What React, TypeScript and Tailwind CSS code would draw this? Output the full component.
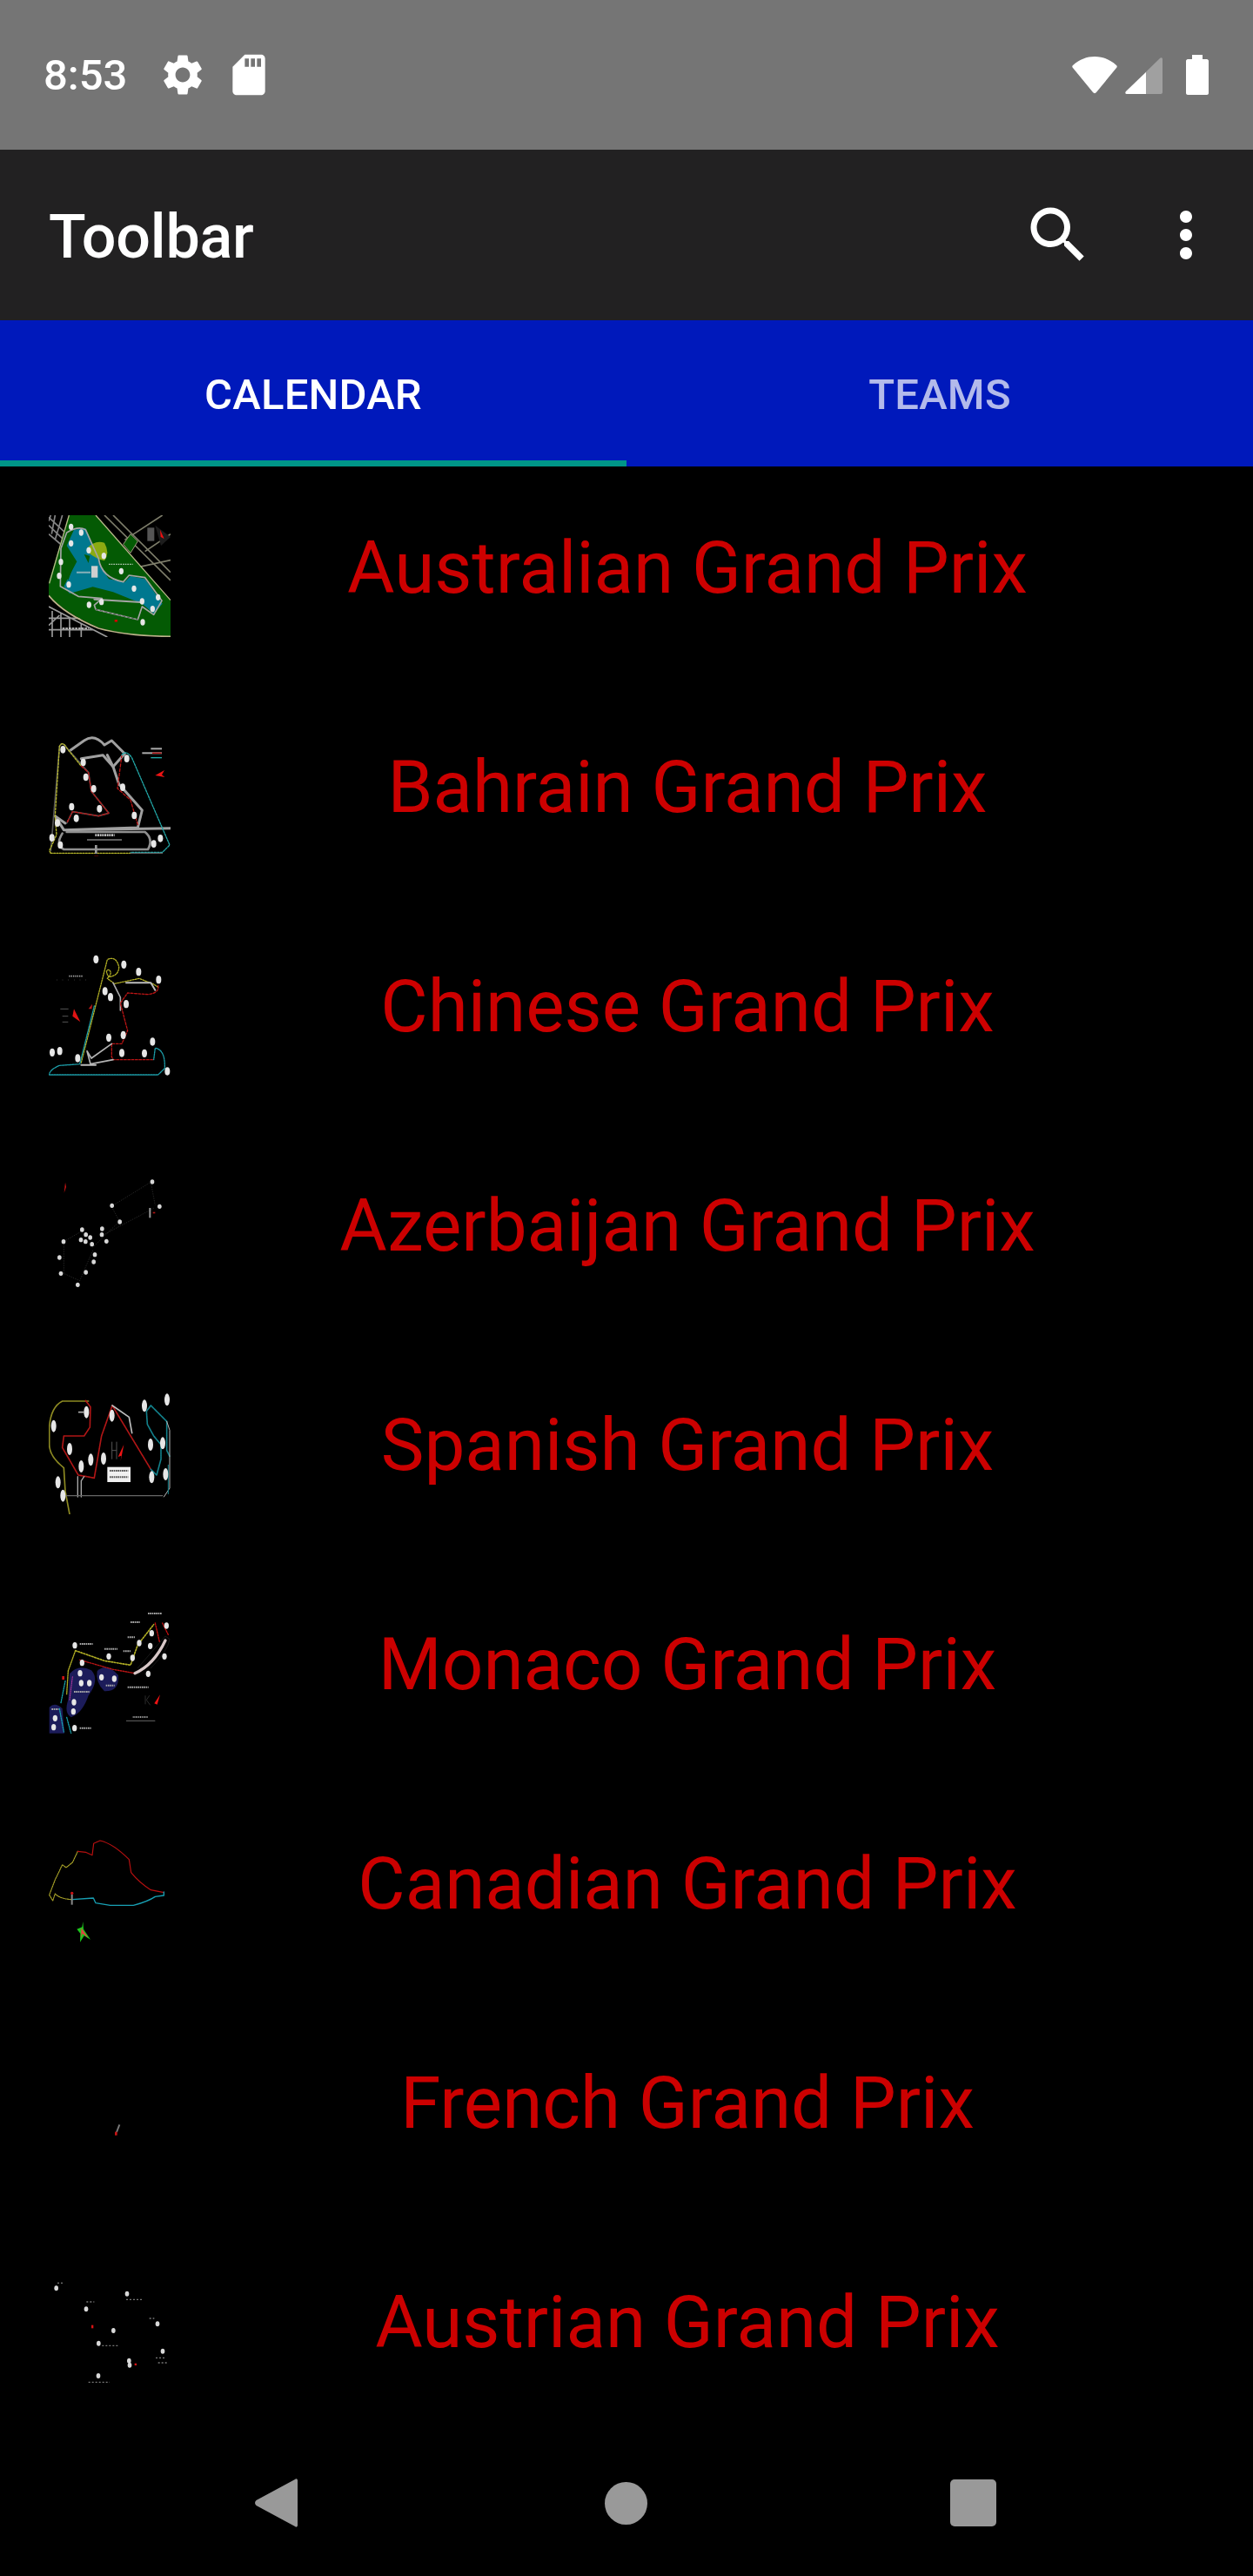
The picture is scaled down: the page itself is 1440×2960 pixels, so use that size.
import React from "react";

const dots = (pts: number[][], rx = 7, ry = 10, fill = "#e6e6e6") =>
  pts.map((p, i) => <ellipse key={i} cx={p[0]} cy={p[1]} rx={rx} ry={ry} fill={fill} />);

function Line({ d, c, w = 3, dash }: { d: string; c: string; w?: number; dash?: string }) {
  return <path d={d} fill="none" stroke={c} strokeWidth={w} strokeDasharray={dash} strokeLinejoin="round" strokeLinecap="round" />;
}

function MapBox({ y, children }: { y: number; children: React.ReactNode }) {
  return (
    <svg viewBox={`78 ${y} 420 420`} className="w-[140px] h-[140px] shrink-0 blur-[0.7px]">
      {children}
    </svg>
  );
}

function Australia() {
  return (
    <MapBox y={65}>
      <g stroke="#858585" strokeWidth="5" fill="none">
        <path d="M78 72 L140 130 M78 100 L130 150 M78 130 L125 170 M85 65 L78 85 M100 65 L88 130 M125 65 L100 150" />
        <path d="M270 65 L498 290 M300 65 L498 262 M410 190 L498 130 M360 250 L498 220 M340 150 L470 65" stroke="#7d7d6a" />
        <path d="M78 380 L280 485 M90 395 L90 485 M78 420 L190 420 M78 460 L230 460 M120 400 L120 485 M150 420 L150 485 M190 440 L190 485 M115 410 L78 445" stroke="#9a9a9a" />
      </g>
      <path d="M148 65 L240 65 L498 358 L498 482 Q350 482 250 452 Q130 400 78 340 L78 295 Z" fill="#045a04" />
      <path d="M148 65 L80 300 M240 65 L498 358" stroke="#b9b98a" strokeWidth="4" fill="none" />
      <path d="M78 342 Q130 405 250 455 Q350 482 498 483" stroke="#bdb48a" strokeWidth="5" fill="none" />
      <path d="M165 115 L205 110 L240 190 L255 240 L285 285 L340 295 L360 275 L410 285 L470 370 L440 405 L400 370 L300 330 L230 312 L150 335 L130 310 L175 225 L140 170 Z" fill="#00788f" />
      <path d="M210 180 Q235 150 270 160 Q290 195 270 222 Q240 215 210 190 Z" fill="#8cab12" />
      <path d="M130 195 L165 235 L145 290 L120 200 Z" fill="#045a04" />
      <path d="M200 200 L215 230 L220 205 Z" fill="#045a04" />
      <path d="M360 130 L385 155 L360 195 L335 165 Z" fill="#045a04" stroke="#9a9a7a" strokeWidth="3" />
      <Line d="M140 125 Q180 100 205 115 L250 215 Q260 280 335 295 L355 272 L410 280 L468 360 L440 408 L400 380 L385 425 L240 390 L235 375 L262 352 L180 345 L118 310 L120 180 Z" c="#a5a5a5" w={5} />
      <Line d="M235 355 L395 365" c="#a5a5a5" w={6} />
      <Line d="M240 390 L385 425" c="#333" w={2} dash="8 8" />
      {dots([[155,105],[190,125],[155,162],[120,226],[114,274],[147,304],[216,186],[268,205],[328,258],[372,318],[455,348],[400,362],[436,388],[402,434],[260,364],[217,374]], 8, 11)}
      <rect x="225" y="240" width="22" height="40" fill="#cfcfcf" />
      <path d="M175 262 H222" stroke="#ccc" strokeWidth="6" strokeDasharray="4 2" />
      <path d="M285 234 H368" stroke="#b5c9b5" strokeWidth="4" strokeDasharray="5 3" />
      <rect x="418" y="108" width="24" height="46" fill="#555" />
      <path d="M445 100 L498 140 L465 170 Z" fill="#1d1d1d" />
      <path d="M462 115 L476 146 L464 140 Z" fill="#f01010" />
      <rect x="305" y="425" width="10" height="8" fill="#d00000" />
      <path d="M125 455 H215" stroke="#ddd" strokeWidth="5" strokeDasharray="8 3" />
    </MapBox>
  );
}

function Bahrain() {
  return (
    <MapBox y={39}>
      <Line d="M150 95 L200 60 Q235 35 270 75 L295 60 L340 105 L300 150 L265 110 L190 122" c="#a0a0a0" w={9} />
      <Line d="M300 150 L280 110 M300 150 L320 210 L400 300 L385 360 L130 368 L100 320 L135 345 M498 362 L130 368" c="#a0a0a0" w={9} />
      <Line d="M125 380 Q100 420 130 435 H420 Q440 400 410 375 H140" c="#8f8f8f" w={8} />
      <Line d="M115 80 L85 440 M115 80 Q125 60 140 85 L215 170 L225 235 L285 310 L250 320 L160 305 L140 345" c="#555" w={5} />
      <Line d="M85 448 L80 440 L105 385 L100 320 L115 80 Q125 60 140 85 L190 148" c="#b5b52a" w={4} dash="7 5" />
      <Line d="M85 448 H360" c="#b5b52a" w={4} dash="6 4" />
      <Line d="M190 148 L215 170 L225 235 L285 310 L250 320 L160 305 L140 345 M385 350 L360 265 L315 225 L330 110" c="#b81414" w={4} dash="10 6" />
      <Line d="M330 110 Q345 90 365 120 L495 420 L470 445 H360" c="#22a7a7" w={4} dash="7 4" />
      <Line d="M360 448 H470" c="#777" w={3} />
      {dots([[127,91],[197,135],[206,186],[233,226],[253,295],[157,288],[173,328],[108,344],[89,395],[118,420],[347,122],[333,221],[373,318],[463,397],[440,416]], 9, 13)}
      <path d="M238 386 H305" stroke="#bbb" strokeWidth="8" strokeDasharray="6 2" />
      <path d="M210 402 H330" stroke="#bbb" strokeWidth="3" />
      <rect x="430" y="85" width="38" height="6" fill="#aaa" />
      <rect x="400" y="100" width="68" height="6" fill="#aaa" />
      <rect x="435" y="101" width="32" height="4" fill="#b81414" />
      <rect x="430" y="117" width="38" height="4" fill="#22a7a7" />
      <path d="M445 180 L477 162 L468 178 L478 186 Z" fill="#ef1414" />
      <rect x="237" y="420" width="8" height="30" fill="#999" />
      <rect x="235" y="458" width="14" height="4" fill="#d00" />
    </MapBox>
  );
}

function Chinese() {
  return (
    <MapBox y={795}>
      <Line d="M190 1170 L280 815 Q310 800 320 840 Q320 870 285 875 Q270 850 285 850 Q300 860 280 880 L305 898 L390 880 L440 900 L455 910" c="#b0ad24" w={4} dash="5 4" />
      <Line d="M300 895 L325 945 L325 990" c="#aaaaaa" w={5} />
      <Line d="M345 895 L430 895 L445 920" c="#bdbdbd" w={6} />
      <Line d="M455 905 Q460 930 420 935 L350 930 L325 965 L350 1060 L330 1105 L295 1105 L295 1150 L300 1160 H440" c="#b81414" w={4} dash="8 5" />
      <Line d="M295 1105 L225 1155 L210 1130 L222 1175 L300 1160" c="#b3b3b3" w={5} />
      <Line d="M235 975 L185 1175 L115 1180 Q80 1195 80 1212 H455 L478 1190 Q480 1125 445 1120 L440 1160" c="#1c9ca7" w={4} dash="6 3" />
      <Line d="M190 1178 H240" c="#bbb" w={6} />
      {dots([[241,814],[337,832],[388,857],[457,884],[272,924],[291,944],[345,968],[335,1075],[285,1084],[330,1137],[408,1138],[436,1098],[487,1200],[178,1155],[90,1135],[116,1130]], 9, 14)}
      <path d="M105 885 H225" stroke="#777" strokeWidth="2" strokeDasharray="2 18" />
      <path d="M148 872 H195" stroke="#aaa" strokeWidth="5" strokeDasharray="4 3" />
      <path d="M165 985 L187 1030 L160 1010 Z" fill="#e01414" />
      <path d="M215 985 L228 968 L226 985 Z" fill="#c01818" />
      <path d="M118 985 H146 M125 1010 H145 M125 1030 H145" stroke="#555" strokeWidth="3" />
    </MapBox>
  );
}

function Azerbaijan() {
  return (
    <MapBox y={144}>
      <path d="M135 176 L131 212 L138 192 Z" fill="#d01414" />
      <path d="M130 380 L190 345 M300 255 L430 175 L445 255 M295 260 L322 310 L230 400 M440 265 L270 355 M230 410 L185 515 L130 490 L130 380" stroke="#3a3a3a" strokeWidth="2" strokeDasharray="4 4" fill="none" />
      {dots([[435,174],[460,259],[296,256],[323,312],[262,336],[261,356],[277,379],[193,339],[206,356],[221,366],[189,374],[205,380],[227,389],[237,425],[233,450],[206,486],[178,529],[120,490],[115,435],[129,380]], 7, 8, "#d8d8d8")}
      <rect x="424" y="264" width="6" height="34" fill="#9a9a9a" />
      <rect x="437" y="278" width="8" height="5" fill="#b01414" />
    </MapBox>
  );
}

function Spanish() {
  return (
    <MapBox y={900}>
      <Line d="M215 930 H125 Q85 950 80 1020 V1080 Q80 1120 130 1160 L135 1240 L150 1320" c="#8d8a22" w={5} />
      <Line d="M205 928 L222 950 L220 1020 L200 1050 H130 L125 1090 L180 1185 L235 1195 L260 1050 L297 945 L430 1165" c="#b01616" w={5} dash="4 2" />
      <Line d="M297 945 L355 985 L365 1040" c="#bdbdbd" w={5} />
      <Line d="M178 1190 V1260 M190 1260 V1205 L200 1190" c="#aaaaaa" w={4} />
      <Line d="M430 1165 L450 1185 L465 1130 V1080 L440 1050 L418 1010 L415 965 L430 945 L485 1000 V1100 L495 1120" c="#12808b" w={5} dash="4 2" />
      <Line d="M485 1000 L495 1030 V1230 L475 1260" c="#bbb" w={3} />
      <Line d="M490 1150 V1250" c="#12808b" w={3} dash="4 2" />
      <Line d="M135 1256 H470" c="#666" w={4} />
      {dots([[95,1016],[150,1095],[208,968],[190,1155],[223,1132],[267,1128],[110,1210],[296,980],[408,946],[486,925],[429,1080],[471,1075],[433,1192],[481,1182],[127,1256]], 9, 21)}
      <rect x="280" y="1157" width="80" height="52" fill="#f0f0f0" />
      <path d="M288 1170 H352 M288 1192 H352" stroke="#555" strokeWidth="6" strokeDasharray="5 2" />
      <path d="M296 1070 V1130 M312 1070 V1130 M296 1100 H312" stroke="#555" strokeWidth="3" />
      <path d="M337 1080 L317 1122 L328 1118 L326 1136 Z" fill="#ef1414" />
      <path d="M180 968 H200" stroke="#aaa" strokeWidth="5" />
    </MapBox>
  );
}

function Monaco() {
  return (
    <MapBox y={96}>
      <path d="M150 310 Q180 275 225 298 Q255 330 215 385 Q195 445 155 460 Q130 445 145 400 Z" fill="#1c1c5a" />
      <path d="M245 300 Q280 270 318 315 Q322 372 270 370 Q238 340 245 300 Z" fill="#1c1c5a" />
      <path d="M80 425 Q100 405 125 430 L132 515 H80 Z" fill="#1c1c5a" />
      <Line d="M170 230 L145 300 L140 380" c="#b0ad24" w={4} dash="5 3" />
      <Line d="M170 230 L270 265 L360 280 L385 210 L440 140" c="#b0ad24" w={5} dash="5 5" />
      <Line d="M185 262 L300 295 L375 308" c="#b81414" w={4} dash="5 4" />
      <Line d="M375 308 Q440 280 480 195" c="#d8c8c8" w={10} />
      <Line d="M445 135 L460 200 M490 175 L470 135" c="#c01010" w={4} dash="6 4" />
      <Line d="M385 290 L480 180 L495 190 Q490 230 430 290" c="#222" w={2} />
      <Line d="M160 320 L150 400" c="#b53aa0" w={3} dash="4 3" />
      <Line d="M135 335 L120 410 M140 460 L155 515 M115 430 L130 510" c="#16a0ac" w={4} dash="4 4" />
      {dots([[168,212],[193,272],[285,250],[367,255],[390,204],[428,214],[433,170],[484,144],[477,250],[421,310],[186,308],[190,342],[218,342],[260,322],[304,327],[165,408],[163,440],[100,463],[95,494],[167,497]], 8, 11)}
      <path d="M360 132 H392 M420 102 H468 M350 184 H375 M270 224 H315 M335 232 H360 M185 207 H230 M350 356 H422 M185 497 H224 M165 372 H218 M275 350 H305 M88 432 H112" stroke="#a8a8a8" strokeWidth="6" strokeDasharray="5 2" />
      <path d="M345 472 H445" stroke="#999" strokeWidth="2" />
      <path d="M368 459 H420" stroke="#999" strokeWidth="6" strokeDasharray="3 2" />
      <path d="M462 382 L442 412 L452 416 Z" fill="#ef1414" />
      <path d="M411 385 V415 M425 385 L415 400 L428 418" stroke="#444" strokeWidth="2" fill="none" />
      <rect x="124" y="318" width="8" height="12" fill="#d01414" />
    </MapBox>
  );
}

function Canadian() {
  return (
    <MapBox y={852}>
      <Line d="M155 1088 Q115 1085 100 1068 L92 1092 L80 1072 L100 1020 L125 968 L138 978 L160 960 L178 922" c="#a8a228" w={3.5} dash="5 3" />
      <Line d="M178 922 L205 925 L228 935 L233 895 L255 885 Q300 895 355 950 L362 995 Q390 1030 430 1055 L475 1064" c="#b81010" w={3.5} />
      <Line d="M160 1088 L232 1083 L240 1100 L290 1108 H370 Q420 1095 445 1078 L475 1074 L475 1062" c="#18a0b4" w={4} />
      <rect x="155" y="1070" width="6" height="36" fill="#888" />
      <circle cx="158" cy="1066" r="5" fill="#d01414" />
      <path d="M196 1164 L198 1190 L222 1226 L200 1213 L186 1235 L187 1205 L175 1190 L193 1183 Z" fill="#1cc81c" />
      <path d="M190 1186 L214 1220 L194 1205 L190 1222 Z" fill="#e84040" />
    </MapBox>
  );
}

function French() {
  return (
    <MapBox y={48}>
      <path d="M322 304 L312 330" stroke="#777" strokeWidth="6" />
      <rect x="306" y="329" width="8" height="12" fill="#c81414" />
    </MapBox>
  );
}

function Austrian() {
  return (
    <MapBox y={804}>
      {dots([[104,868],[207,940],[348,887],[453,991],[301,1014],[250,1058],[471,1085],[249,1170],[355,1118],[357,1133]], 7, 9, "#d8d8d8")}
      <path d="M108 850 H130 M208 915 H235 M345 907 H400 M425 972 H442 M262 1066 H316 M447 1108 H478 M455 1125 H486 M215 1192 H288" stroke="#777" strokeWidth="4" strokeDasharray="6 6" />
      <rect x="225" y="995" width="7" height="11" fill="#d81414" />
      <rect x="374" y="1127" width="7" height="7" fill="#d81414" />
    </MapBox>
  );
}

const races: [string, React.ReactNode][] = [
  ["Australian Grand Prix", <Australia />],
  ["Bahrain Grand Prix", <Bahrain />],
  ["Chinese Grand Prix", <Chinese />],
  ["Azerbaijan Grand Prix", <Azerbaijan />],
  ["Spanish Grand Prix", <Spanish />],
  ["Monaco Grand Prix", <Monaco />],
  ["Canadian Grand Prix", <Canadian />],
  ["French Grand Prix", <French />],
  ["Austrian Grand Prix", <Austrian />],
];

export default function App() {
  return (
    <div className="w-[1440px] h-[2960px] flex flex-col bg-black overflow-hidden font-['Roboto',sans-serif]">
      <div className="h-[172px] shrink-0 bg-[#757575] flex items-center pl-[50px] pr-[51px] text-white">
        <span className="text-[49px] leading-[58px] font-medium w-[132px] mt-[2px]">8:53</span>
        <svg viewBox="0 0 24 24" className="w-[56px] h-[56px] fill-white">
          <path d="M19.14 12.94c.04-.3.06-.61.06-.94 0-.32-.02-.64-.07-.94l2.03-1.58c.18-.14.23-.41.12-.61l-1.92-3.32c-.12-.22-.37-.29-.59-.22l-2.39.96c-.5-.38-1.03-.7-1.62-.94l-.36-2.54c-.04-.24-.24-.41-.48-.41h-3.84c-.24 0-.43.17-.47.41l-.36 2.54c-.59.24-1.13.57-1.62.94l-2.39-.96c-.22-.08-.47 0-.59.22L2.74 8.87c-.12.21-.08.47.12.61l2.03 1.58c-.05.3-.09.63-.09.94s.02.64.07.94l-2.03 1.58c-.18.14-.23.41-.12.61l1.92 3.32c.12.22.37.29.59.22l2.39-.96c.5.38 1.03.7 1.62.94l.36 2.54c.05.24.24.41.48.41h3.84c.24 0 .44-.17.47-.41l.36-2.54c.59-.24 1.13-.56 1.62-.94l2.39.96c.22.08.47 0 .59-.22l1.92-3.32c.12-.22.07-.47-.12-.61l-2.01-1.58zM12 15.6c-1.98 0-3.6-1.62-3.6-3.6s1.62-3.6 3.6-3.6 3.6 1.62 3.6 3.6-1.62 3.6-3.6 3.6z" />
        </svg>
        <svg viewBox="0 0 24 24" className="w-[56px] h-[56px] fill-white ml-[20px]">
          <path d="M18 2h-8L4.02 8 4 20c0 1.1.9 2 2 2h12c1.1 0 2-.9 2-2V4c0-1.1-.9-2-2-2zm-6 6h-2V4h2v4zm3 0h-2V4h2v4zm3 0h-2V4h2v4z" />
        </svg>
        <svg viewBox="0 0 54 44" className="w-[54px] h-[44px] fill-white ml-auto">
          <path d="M2 11C10 4 18 1 27 1s17 3 25 10c1 1 1 2 0 3L29 42c-1 1.500-3 1.500-4 0L2 14c-1-1-1-2 0-3z" />
        </svg>
        <svg viewBox="0 0 43 43" className="w-[43px] h-[43px] ml-[8px]">
          <path d="M40 2c1-1 3-1 3 1v38c0 1-1 2-2 2H2c-2 0-2-2-1-3z" fill="#a0a0a0" />
          <path d="M24 18L1 40c-1 1-1 3 1 3h22z" fill="#ffffff" />
        </svg>
        <svg viewBox="0 0 26 46" className="w-[26px] h-[46px] fill-white ml-[27px]">
          <path d="M7 0h12v5h5c1 0 2 1 2 2v37c0 1-1 2-2 2H2c-1 0-2-1-2-2V7c0-1 1-2 2-2h5z" />
        </svg>
      </div>
      <div className="h-[196px] shrink-0 bg-[#222122] flex items-center pl-[56px] pr-[35px]">
        <span className="text-[70px] leading-[82px] font-medium text-white mt-[3px] tracking-[-0.2px]">Toolbar</span>
        <svg viewBox="0 0 24 24" className="w-[84px] h-[84px] fill-white ml-auto">
          <path d="M15.5 14h-.79l-.28-.27C15.41 12.59 16 11.11 16 9.5 16 5.91 13.09 3 9.5 3S3 5.91 3 9.5 5.91 16 9.5 16c1.61 0 3.09-.59 4.23-1.57l.27.28v.79l5 4.99L20.49 19l-4.99-5zm-6 0C7.01 14 5 11.99 5 9.5S7.01 5 9.5 5 14 7.01 14 9.5 11.99 14 9.5 14z" />
        </svg>
        <svg viewBox="0 0 24 24" className="w-[84px] h-[84px] fill-white ml-[63px]">
          <path d="M12 8c1.100 0 2-.9 2-2s-.9-2-2-2-2 .9-2 2 .9 2 2 2zm0 2c-1.100 0-2 .9-2 2s.9 2 2 2 2-.9 2-2-.9-2-2-2zm0 6c-1.100 0-2 .9-2 2s.9 2 2 2 2-.9 2-2-.9-2-2-2z" />
        </svg>
      </div>
      <div className="h-[168px] shrink-0 bg-[#0019bb] flex text-[49px] leading-[58px] font-medium tracking-[0.2px]">
        <div className="flex-1 flex items-center justify-center text-white border-b-[7px] border-[#009688] pt-[10px]">CALENDAR</div>
        <div className="flex-1 flex items-center justify-center text-white/70 border-b-[7px] border-transparent pt-[10px]">TEAMS</div>
      </div>
      <div className="flex-1 min-h-0 pt-[56px] pl-[56px] pr-[56px] flex flex-col gap-[112px] overflow-hidden">
        {races.map(([name, map]) => (
          <div key={name} className="flex h-[140px] shrink-0">
            {map}
            <div className="flex-1 text-center text-[83.6px] leading-[98px] mt-[11px] text-[#cc0000] whitespace-nowrap">{name}</div>
          </div>
        ))}
      </div>
      <div className="h-[168px] shrink-0 bg-black flex items-center pl-[293px]">
        <svg viewBox="0 0 49 56" className="w-[49px] h-[56px] fill-[#999999]">
          <path d="M46 1c1.500-1.500 3-.5 3 1.500v51c0 2-1.500 3-3 1.500L1.500 31c-2-2-2-4 0-6z" />
        </svg>
        <div className="w-[49px] h-[49px] rounded-full bg-[#999999] ml-[353px]" />
        <div className="w-[53px] h-[54px] rounded-[5px] bg-[#999999] ml-[348px]" />
      </div>
    </div>
  );
}
